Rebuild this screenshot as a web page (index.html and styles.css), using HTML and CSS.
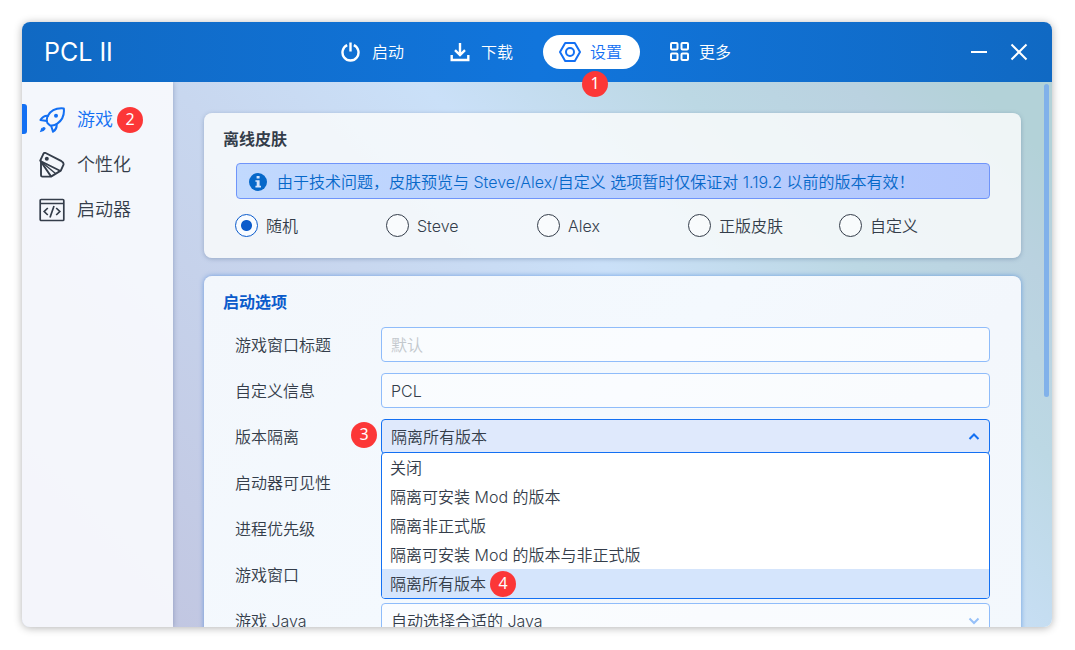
FILE: index.html
```html
<!DOCTYPE html>
<html lang="zh-CN">
<head>
<meta charset="utf-8">
<title>PCL II</title>
<link rel="stylesheet" href="styles.css">
</head>
<body>
<div class="window">
  <header class="titlebar">
    <h1 class="brand">PCL II</h1>
    <nav class="tabs">
      <button class="tab" type="button">
        <svg class="tab-icon" viewBox="0 0 22 22"><path d="M6.200 4.200A8 8 0 1 0 12.800 4.200M9.500 1.500V10.500" fill="none" stroke="currentColor" stroke-width="2.400"/></svg>
        启动
      </button>
      <button class="tab" type="button">
        <svg class="tab-icon" viewBox="0 0 22 22"><path d="M10 2V13.500M5 9.200L10 14L15 9.200M1.700 14V19H18.300V14" fill="none" stroke="currentColor" stroke-width="2.400"/></svg>
        下载
      </button>
      <button class="tab tab-active" type="button">
        <svg class="tab-icon" viewBox="0 0 22 22"><g fill="none" stroke="currentColor" stroke-width="2" stroke-linejoin="round"><path d="M6.200 2H15.800L21 11L15.800 20H6.200L1 11Z"/><circle cx="11" cy="11" r="4"/></g></svg>
        设置
        <span class="badge badge-below">1</span>
      </button>
      <button class="tab" type="button">
        <svg class="tab-icon" viewBox="0 0 22 22"><g fill="none" stroke="currentColor" stroke-width="2"><rect x="3" y="2" width="6.500" height="6.500" rx="1"/><rect x="13.500" y="2" width="6.500" height="6.500" rx="1"/><rect x="3" y="12.500" width="6.500" height="6.500" rx="1"/><rect x="13.500" y="12.500" width="6.500" height="6.500" rx="1"/></g></svg>
        更多
      </button>
    </nav>
    <div class="controls">
      <button class="control" type="button" aria-label="最小化"><svg viewBox="0 0 18 18"><path d="M1 9H17" stroke="currentColor" stroke-width="2"/></svg></button>
      <button class="control" type="button" aria-label="关闭窗口"><svg viewBox="0 0 18 18"><path d="M1.500 1.500L16.500 16.500M16.500 1.500L1.500 16.500" stroke="currentColor" stroke-width="2"/></svg></button>
    </div>
  </header>
  <div class="body">
    <aside class="sidebar">
      <button class="side-item side-active" type="button">
        <svg class="side-icon" viewBox="0 0 26 26"><g fill="none" stroke="currentColor" stroke-width="2" stroke-linejoin="round" stroke-linecap="round"><path d="M24.800 1.400C18 .8 12 3 9 8.600C7.600 11 7.500 13.600 8.400 16L10.800 18.200C13.500 19 16 18.300 18.300 16.600C23.500 13 25.500 7.500 24.800 1.400Z"/><path d="M9.200 8.800C5.800 8.400 3 10.400 1.400 13L7.800 14"/><path d="M17.600 17.600C18 20.500 16.500 23 14 24.800L12.200 19"/></g><circle cx="17" cy="8.800" r="2" fill="currentColor"/><path d="M2.500 20.800L5.500 23.800L.8 25.200Z" fill="currentColor"/><circle cx="4.800" cy="21.600" r="1.700" fill="currentColor"/></svg>
        游戏
        <span class="badge badge-inline">2</span>
      </button>
      <button class="side-item" type="button">
        <svg class="side-icon" viewBox="0 0 26 26"><g fill="none" stroke="currentColor" stroke-width="1.900" stroke-linejoin="round"><path d="M6.600 1L22.500 9.200Q25.300 10.800 24.300 13.200L21.800 18.600L12 24.600H3.400Q2 24.600 2 23.200V9.500L1.200 8.600L4.400 1.800Q5.200 .4 6.600 1Z"/><path d="M1.400 9L21.500 19M2.200 10L12 24.400"/><path d="M2 9.500L16.500 21.500" stroke-width="1.400"/></g><circle cx="7.800" cy="6.800" r="2" fill="currentColor"/></svg>
        个性化
      </button>
      <button class="side-item" type="button">
        <svg class="side-icon" viewBox="0 0 26 26"><g fill="none" stroke="currentColor" stroke-width="1.700"><rect x="1.200" y="2.500" width="23.600" height="21" rx="1"/><path d="M1.200 6.500H24.800"/><path d="M8.800 11L5.200 14.500L8.800 18M17.200 11L20.800 14.500L17.200 18M15 9L11 20.500"/></g></svg>
        启动器
      </button>
    </aside>
    <main class="content">
      <section class="card">
        <h2 class="card-title">离线皮肤</h2>
        <div class="card-body">
          <p class="notice">
            <svg class="notice-icon" viewBox="0 0 18 18"><circle cx="9" cy="9" r="9" fill="#0668c9"/><path d="M7.600 3H10.600V5.600H7.600ZM6.400 7.200H10.600V12.800H12V14.500H6.400V12.800H7.700V8.800H6.400Z" fill="#d5e4fd"/></svg>
            <span>由于技术问题，皮肤预览与 Steve/Alex/自定义 选项暂时仅保证对 1.19.2 以前的版本有效！</span>
          </p>
          <div class="radios">
            <label class="radio"><input type="radio" name="skin" checked>随机</label>
            <label class="radio"><input type="radio" name="skin">Steve</label>
            <label class="radio"><input type="radio" name="skin">Alex</label>
            <label class="radio"><input type="radio" name="skin">正版皮肤</label>
            <label class="radio"><input type="radio" name="skin">自定义</label>
          </div>
        </div>
      </section>
      <section class="card card-focus">
        <h2 class="card-title">启动选项</h2>
        <div class="card-body form">
          <label for="title">游戏窗口标题</label>
          <div class="field"><input class="box" id="title" type="text" placeholder="默认"></div>
          <label for="info">自定义信息</label>
          <div class="field"><input class="box" id="info" type="text" value="PCL"></div>
          <label for="isolate">版本隔离</label>
          <div class="field field-open">
            <select class="box" id="isolate"><option>隔离所有版本</option></select>
            <svg class="chevron" viewBox="0 0 12 12"><path d="M1.500 8L6 3.500L10.500 8" fill="none" stroke="currentColor" stroke-width="2"/></svg>
            <span class="badge badge-before">3</span>
            <ul class="menu" role="listbox" aria-label="版本隔离">
              <li class="option" role="option">关闭</li>
              <li class="option" role="option">隔离可安装 Mod 的版本</li>
              <li class="option" role="option">隔离非正式版</li>
              <li class="option" role="option">隔离可安装 Mod 的版本与非正式版</li>
              <li class="option option-active" role="option" aria-selected="true">隔离所有版本<span class="badge badge-inline">4</span></li>
            </ul>
          </div>
          <label for="visible">启动器可见性</label>
          <div class="field"><select class="box" id="visible"></select></div>
          <label for="priority">进程优先级</label>
          <div class="field"><select class="box" id="priority"></select></div>
          <label for="size">游戏窗口</label>
          <div class="field"><select class="box" id="size"></select></div>
          <label for="java">游戏 Java</label>
          <div class="field">
            <select class="box" id="java"><option>自动选择合适的 Java</option></select>
            <svg class="chevron" viewBox="0 0 12 12"><path d="M1.500 3.500L6 8L10.500 3.500" fill="none" stroke="currentColor" stroke-width="2"/></svg>
          </div>
        </div>
      </section>
    </main>
    <div class="scroll-thumb"></div>
  </div>
</div>
</body>
</html>
```
FILE: styles.css
```css
* { box-sizing: border-box; }

body {
  margin: 0;
  height: 100vh;
  padding: 22px 23px 23px 22px;
  background: #fff;
  color: #343d4a;
  font: 350 16px/24px Inter, "Noto Sans CJK SC", sans-serif;
  overflow: hidden;
}

h1, h2, p, ul { margin: 0; padding: 0; }

button {
  border: 0;
  background: none;
  color: inherit;
  font: inherit;
}

.window {
  display: flex;
  flex-direction: column;
  height: 100%;
  border-radius: 8px;
  overflow: hidden;
  box-shadow: 0 1px 9px rgba(0, 0, 0, .3);
}

.titlebar {
  display: grid;
  grid-template-columns: 1fr auto 1fr;
  align-items: center;
  flex: none;
  height: 60px;
  position: relative;
  z-index: 2;
  background: linear-gradient(90deg, #1069c3, #1175dc 50%, #1069c3);
  color: #fff;
}

.brand {
  padding-left: 22px;
  font: 400 25px/32px Inter, sans-serif;
}

.tabs { display: flex; gap: 12px; }

.tab {
  position: relative;
  display: flex;
  align-items: center;
  gap: 9px;
  height: 34px;
  padding: 0 18px 0 16px;
  border-radius: 17px;
}

.tab-active { background: #fff; color: #1370f3; }
.tab-icon { width: 22px; height: 22px; }

.controls {
  display: flex;
  justify-content: flex-end;
  gap: 22px;
  padding-right: 24px;
}

.control { display: flex; padding: 0; }
.control svg { width: 18px; height: 18px; }

.badge {
  display: block;
  flex: none;
  width: 26px;
  height: 26px;
  border-radius: 50%;
  background: #fc3737;
  color: #fff;
  font: 16px/24px "Noto Sans", sans-serif;
  text-align: center;
}

.badge-below { position: absolute; top: 36px; left: 39px; }
.badge-before { position: absolute; top: 3px; left: -30px; }
.badge-inline { margin-left: 4px; }

.body {
  position: relative;
  display: flex;
  flex: 1;
  min-height: 0;
  background: linear-gradient(45deg, #c1c6e1 8%, #c8d7ef 44%, #cae0f8 60%, #bcd8e4 76%, #bad2e0 87%, #b3d2d8 95%);
}

.sidebar {
  flex: none;
  width: 151px;
  padding-top: 15px;
  background: rgba(251, 252, 254, .88);
  box-shadow: 0 0 5px rgba(60, 80, 130, .4);
}

.side-item {
  position: relative;
  display: flex;
  align-items: center;
  width: 100%;
  height: 45px;
  padding: 0 0 0 17px;
  font-size: 18px;
}

.side-icon { width: 26px; height: 26px; margin-right: 12px; }
.side-active { color: #1370f3; }

.side-active::before {
  content: "";
  position: absolute;
  left: 0;
  top: 7px;
  width: 5px;
  height: 30px;
  border-radius: 0 3px 3px 0;
  background: #1370f3;
}

.content {
  display: flex;
  flex-direction: column;
  gap: 18px;
  flex: 1;
  min-width: 0;
  padding: 31px;
  overflow: hidden;
}

.card {
  flex: none;
  padding: 14px 31px 21px 19px;
  border-radius: 8px;
  background: rgba(250, 251, 252, .84);
  background-clip: padding-box;
  box-shadow: 0 1px 4px rgba(60, 90, 130, .35);
}

.card-focus {
  background: linear-gradient(135deg, #f3f7fc, #f4f9fe 45%, #f3f7fc 70%, #f3f8fd);
  box-shadow: 0 0 5px rgba(60, 125, 215, .65);
}

.card-title { font-size: 16px; font-weight: 700; }
.card-focus .card-title { color: #0b5bcb; }
.card-body { padding: 12px 0 0 12px; }

.notice {
  display: flex;
  align-items: center;
  gap: 10px;
  height: 36px;
  margin-left: 1px;
  padding: 2px 12px 0;
  border: 1px solid #6f94fa;
  border-radius: 4px;
  background: linear-gradient(90deg, #c1d9fe, #b2c6fd);
  color: #0668c9;
  white-space: nowrap;
}

.notice-icon { width: 18px; height: 18px; flex: none; }

.radios {
  display: grid;
  grid-template-columns: repeat(5, 1fr);
  margin-top: 15px;
}

.radio { display: flex; align-items: center; gap: 8px; height: 23px; }

.radio input {
  appearance: none;
  width: 23px;
  height: 23px;
  margin: 0;
  border: 1px solid #343d4a;
  border-radius: 50%;
  background: rgba(255, 255, 255, .5);
}

.radio input:checked {
  border-color: #0b5bcb;
  background: radial-gradient(circle, #0b5bcb 5px, #f8fbff 6px);
}

.form {
  display: grid;
  grid-template-columns: 146px 1fr;
  align-items: center;
  row-gap: 11px;
  padding-top: 13px;
}

.field { position: relative; height: 35px; }

.box {
  appearance: none;
  display: block;
  width: 100%;
  height: 100%;
  padding: 0 9px;
  border: 1px solid #8fbcfa;
  border-radius: 4px;
  background: rgba(255, 255, 255, .5);
  color: inherit;
  font: inherit;
  outline: 0;
}

.box::placeholder { color: #c3c8cd; }

.chevron {
  position: absolute;
  right: 10px;
  top: 12px;
  width: 12px;
  height: 12px;
  color: #96c0f9;
  pointer-events: none;
}

.field-open { z-index: 1; }
.field-open .box { border-color: #1370f3; background: #dfe9fc; }
.field-open .chevron { color: #1370f3; }

.menu {
  position: absolute;
  top: 33px;
  left: 0;
  right: 0;
  border: 1px solid #1370f3;
  border-radius: 4px;
  background: #fff;
  list-style: none;
  overflow: hidden;
}

.option {
  display: flex;
  align-items: center;
  height: 29px;
  padding: 0 8px;
}

.option-active { background: #d5e5fc; }

.scroll-thumb {
  position: absolute;
  top: 2px;
  right: 3px;
  width: 5px;
  height: 313px;
  border-radius: 3px;
  background: #81b1ea;
}
```
